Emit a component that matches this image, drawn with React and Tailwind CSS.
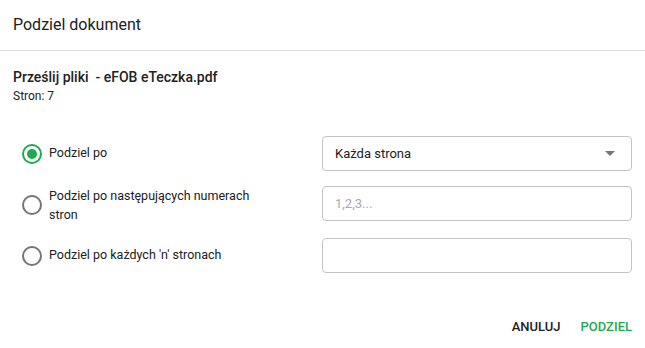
import { useState } from "react"

const Radio = ({ checked, onClick }) => (
  <button
    onClick={onClick}
    className={`w-[20px] h-[20px] rounded-full border-2 flex items-center justify-center shrink-0 ${
      checked ? "border-[#1eaa50]" : "border-[#757575]"
    }`}
  >
    {checked && <span className="w-[10px] h-[10px] rounded-full bg-[#1eaa50]"></span>}
  </button>
)

const App = () => {
  const [mode, setMode] = useState(0)

  return (
    <div className="w-[645px] h-[348px] bg-white text-[#212121] font-['Roboto',sans-serif] flex flex-col">
      <div className="h-[51px] px-[13px] flex items-center border-b border-[#e0e0e0]">
        <h1 className="text-[16px] leading-none">Podziel dokument</h1>
      </div>

      <div className="px-[13px] pt-[17px]">
        <p className="text-[14px] font-medium leading-[18px]">Prześlij pliki &nbsp;- eFOB eTeczka.pdf</p>
        <p className="text-[12px] leading-[16px] mt-[2px]">Stron: 7</p>
      </div>

      <div className="pl-[22px] pr-[13px] pt-[32px] flex flex-col gap-[15px]">
        <div className="flex items-center h-[35px]">
          <div className="flex items-center gap-[7px] w-[300px]">
            <Radio checked={mode === 0} onClick={() => setMode(0)} />
            <span className="text-[12.5px]">Podziel po</span>
          </div>
          <div className="flex-1 h-[35px] border border-[#c4c4c4] rounded-[4px] flex items-center justify-between pl-[12px] pr-[16px]">
            <span className="text-[13px]">Każda strona</span>
            <svg width="10" height="5" viewBox="0 0 10 5">
              <path d="M0 0 L5 5 L10 0 Z" fill="#757575" />
            </svg>
          </div>
        </div>

        <div className="flex items-center h-[35px]">
          <div className="flex items-center gap-[7px] w-[300px] mt-[2px]">
            <Radio checked={mode === 1} onClick={() => setMode(1)} />
            <span className="text-[12.5px] leading-[19px] w-[220px]">Podziel po następujących numerach stron</span>
          </div>
          <input
            placeholder="1,2,3..."
            className="flex-1 h-[35px] border border-[#c4c4c4] rounded-[4px] px-[12px] text-[13px] outline-none placeholder:text-[#a8a8a8]"
          />
        </div>

        <div className="flex items-center h-[35px] mt-[2px]">
          <div className="flex items-center gap-[7px] w-[300px]">
            <Radio checked={mode === 2} onClick={() => setMode(2)} />
            <span className="text-[12.5px]">Podziel po każdych 'n' stronach</span>
          </div>
          <input className="flex-1 h-[35px] border border-[#c4c4c4] rounded-[4px] px-[12px] text-[13px] outline-none" />
        </div>
      </div>

      <div className="flex justify-end items-center gap-[20px] pr-[13px] mt-auto mb-[12px]">
        <button className="text-[13px] font-medium">ANULUJ</button>
        <button className="text-[13px] font-medium text-[#1eaa50]">PODZIEL</button>
      </div>
    </div>
  )
}

export default App
